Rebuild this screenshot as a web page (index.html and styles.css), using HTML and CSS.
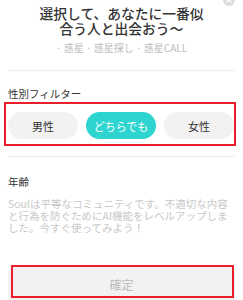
FILE: index.html
```html
<!DOCTYPE html>
<html lang="ja">
<head>
<meta charset="utf-8">
<link rel="stylesheet" href="styles.css">
</head>
<body>
<div class="sheet">
  <span class="close" aria-label="閉じる">
    <svg viewBox="0 0 12 12" width="12" height="12"><circle cx="6" cy="6" r="6" fill="#dcdcdc"/><path d="M4 4 L8 8 M8 4 L4 8" stroke="#fff" stroke-width="1.3" stroke-linecap="round"/></svg>
  </span>
  <h1 class="title">選択して、あなたに一番似<br>合う人と出会おう〜</h1>
  <p class="sub">· 惑星 · 惑星探し · 惑星CALL</p>
  <hr class="divider divider-top">
  <h2 class="label label-gender">性別フィルター</h2>
  <div class="mark gender">
    <button class="pill">男性</button>
    <button class="pill pill-on">どちらでも</button>
    <button class="pill">女性</button>
  </div>
  <hr class="divider divider-mid">
  <h2 class="label label-age">年齢</h2>
  <p class="note">Soulは平等なコミュニティです。不適切な内容と行為を防ぐためにAI機能をレベルアップしました。今すぐ使ってみよう！</p>
  <div class="confirm-wrap">
    <button class="confirm">確定</button>
    <span class="mark-overlay"></span>
  </div>
</div>
</body>
</html>
```
FILE: styles.css
```css
* { box-sizing: border-box; }
html, body { margin: 0; padding: 0; background: #fff; }
body {
  font-family: "Noto Sans CJK JP", "Noto Sans", sans-serif;
  color: #333;
  overflow: hidden;
}
.sheet {
  position: relative;
  padding: 0 8px;
  height: 300px;
}
.close {
  position: absolute;
  top: -6px;
  right: 8px;
  width: 12px;
  height: 12px;
  display: block;
}
.close svg { display: block; }
.title {
  margin: 0;
  padding-top: 6px;
  font-size: 13.75px;
  line-height: 15px;
  font-weight: 500;
  text-align: center;
  color: #333;
}
.sub {
  margin: 5px 0 0;
  font-size: 10px;
  line-height: 14px;
  text-align: center;
  color: #bdbdbd;
}
.divider {
  border: 0;
  height: 1px;
  background: #eeeeee;
  margin: 0;
}
.divider-top { margin-top: 15px; }
.label {
  margin: 0;
  font-size: 10.5px;
  line-height: 14px;
  font-weight: 400;
  color: #333;
}
.label-gender { margin-top: 16px; }
.mark {
  border: 2px solid #e8202a;
}
.gender {
  margin: 1px -1px 0 -4px;
  padding: 8px 0 5px 2px;
  display: grid;
  grid-template-columns: repeat(3, 1fr);
  gap: 8px;
}
.pill {
  font-family: inherit;
  border: 0;
  height: 27px;
  border-radius: 14px;
  background: #f2f2f2;
  color: #333;
  font-size: 11px;
  padding: 0;
}
.pill-on {
  background: #2dd4d0;
  color: #fff;
}
.divider-mid { margin-top: 10px; }
.label-age { margin-top: 18px; }
.note {
  margin: 9px 0 0;
  font-size: 10.5px;
  line-height: 12px;
  color: #c8c8c8;
}
.confirm-wrap {
  position: relative;
  margin-top: 33px;
}
.confirm {
  display: block;
  width: 100%;
  height: 36px;
  border: 0;
  border-radius: 7px;
  background: #f2f2f2;
  color: #bbbbbb;
  font-family: inherit;
  font-size: 12px;
  padding: 0 0 2px;
}
.mark-overlay {
  position: absolute;
  left: 3px;
  right: 1px;
  top: -2px;
  height: 33px;
  border: 2px solid #e8202a;
  pointer-events: none;
}
```
